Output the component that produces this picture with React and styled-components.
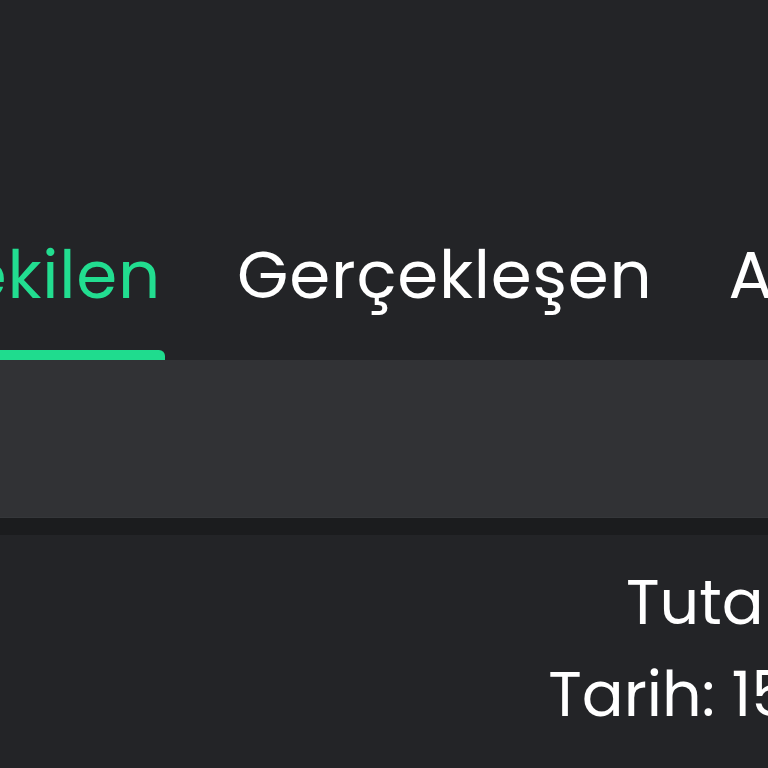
import React, { useState } from "react";
import styled, { createGlobalStyle } from "styled-components";

const GlobalStyle = createGlobalStyle`
    html, body {
        margin: 0;
        padding: 0;
        background: #232427;
        overflow: hidden;
    }
    #root {
        width: 768px;
        height: 768px;
        overflow: hidden;
    }
`;

const tabs = ["Çekilen", "Gerçekleşen", "Açık"];

const App = () => {
    const [active, setActive] = useState(0);

    return (
        <>
            <GlobalStyle />
            <Screen>
                <TabBar>
                    {tabs.map((t, i) => (
                        <Tab
                            key={t}
                            $active={i === active}
                            onClick={() => setActive(i)}
                        >
                            {t}
                        </Tab>
                    ))}
                </TabBar>
                <Panel />
                <Divider />
                <Info>
                    <InfoLine>Tutar: 1.250 ₺</InfoLine>
                    <InfoLine>Tarih: 15.03.2024</InfoLine>
                </Info>
            </Screen>
        </>
    );
};

const Screen = styled.div`
    width: 1400px;
    margin-left: -90px;
    padding-top: 235px;
    font-family: "Poppins", Inter, "Noto Sans", sans-serif;
    color: #ffffff;
`;

const TabBar = styled.div`
    display: flex;
    align-items: flex-end;
    column-gap: 68px;
`;

const Tab = styled.div`
    position: relative;
    padding: 0 4px 45px;
    font-size: 66px;
    line-height: 80px;
    letter-spacing: 0.8px;
    color: ${(p) => (p.$active ? "#22dd90" : "#ffffff")};
    cursor: pointer;

    &::after {
        content: "";
        display: ${(p) => (p.$active ? "block" : "none")};
        position: absolute;
        left: 0;
        right: 0;
        bottom: 0;
        height: 10px;
        background: #1fdc8e;
        border-radius: 6px 6px 0 0;
    }
`;

const Panel = styled.div`
    height: 157px;
    background: #313235;
`;

const Divider = styled.div`
    height: 18px;
    background: #1b1c1e;
    border-top: 1px solid #35373a;
    box-sizing: border-box;
`;

const Info = styled.div`
    margin-top: 22px;
    width: 1131px;
    text-align: right;
`;

const InfoLine = styled.div`
    font-size: 62px;
    line-height: 92px;

    &:first-child {
        word-spacing: 5px;
    }
`;

export default App;
